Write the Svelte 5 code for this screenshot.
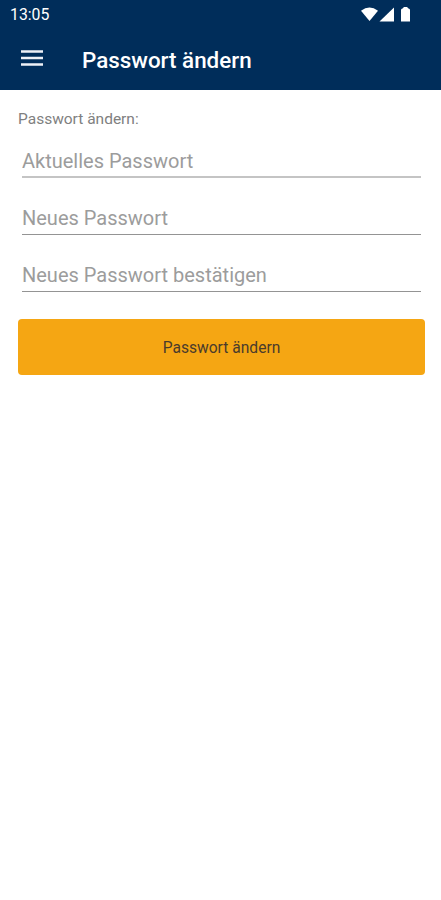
<script lang="ts">
  let current = $state("");
  let fresh = $state("");
  let confirmed = $state("");
</script>

<div class="screen">
  <header>
    <div class="status">
      <span class="time">13:05</span>
      <svg width="52" height="18" viewBox="0 0 52 18" fill="#fff">
        <path d="M1 4.8 Q9.5 -1.8 18 4.8 L9.5 15 Z" />
        <path d="M34 1.5 V15.5 H19.5 Z" />
        <path d="M41 4 Q41 2.5 42.5 2.5 L44 1 H47 L48.5 2.5 Q50 2.5 50 4 V15.5 H41 Z" />
      </svg>
    </div>
    <div class="toolbar">
      <button class="menu" aria-label="Menü">
        <svg width="22" height="16" viewBox="0 0 22 16" fill="#eef1f7">
          <path d="M0 0.2 H22 V2.8 H0 Z M0 6.7 H22 V9.3 H0 Z M0 13.2 H22 V15.8 H0 Z" />
        </svg>
      </button>
      <h1>Passwort ändern</h1>
    </div>
  </header>

  <form onsubmit={(e) => e.preventDefault()}>
    <p>Passwort ändern:</p>
    <input class="current" type="password" placeholder="Aktuelles Passwort" bind:value={current} />
    <input type="password" placeholder="Neues Passwort" bind:value={fresh} />
    <input type="password" placeholder="Neues Passwort bestätigen" bind:value={confirmed} />
    <button class="submit">Passwort ändern</button>
  </form>
</div>

<style>
  :global(body) {
    margin: 0;
    background: #fff;
  }

  .screen {
    min-height: 900px;
    font-family: Roboto, sans-serif;
    background: #fff;
  }

  header {
    height: 90px;
    background: #002d5a;
    color: #fff;
  }

  .status {
    height: 29px;
    padding: 0 29px 0 10px;
    display: flex;
    align-items: center;
    justify-content: space-between;
    font-size: 15.8px;
  }

  .toolbar {
    height: 61px;
    padding-left: 21px;
    display: flex;
    align-items: center;
  }

  .menu {
    width: 22px;
    height: 16px;
    margin-top: -3px;
    padding: 0;
    border: none;
    background: transparent;
  }

  .menu svg {
    display: block;
  }

  h1 {
    margin: 0 0 0 39px;
    font-size: 22.4px;
    font-weight: 500;
  }

  form {
    padding: 19px 16px 0 18px;
    display: flex;
    flex-direction: column;
  }

  p {
    margin: 0 0 4px;
    font-size: 15.5px;
    line-height: 21px;
    color: #808080;
  }

  input {
    height: 44px;
    margin: 0 4px 13px;
    padding: 14px 0 4px;
    box-sizing: border-box;
    border: none;
    border-bottom: 1px solid #949494;
    outline: none;
    font: 20px Roboto, sans-serif;
    color: #333;
  }

  input::placeholder {
    color: #9c9c9c;
  }

  .current {
    padding-bottom: 3px;
    border-bottom: 2px solid #c4c4c4;
  }

  .submit {
    height: 56px;
    margin-top: 14px;
    padding: 2px 0 0;
    border: none;
    border-radius: 4px;
    background: #f5a613;
    color: #4a3b2c;
    font: 15.6px Roboto, sans-serif;
  }
</style>
